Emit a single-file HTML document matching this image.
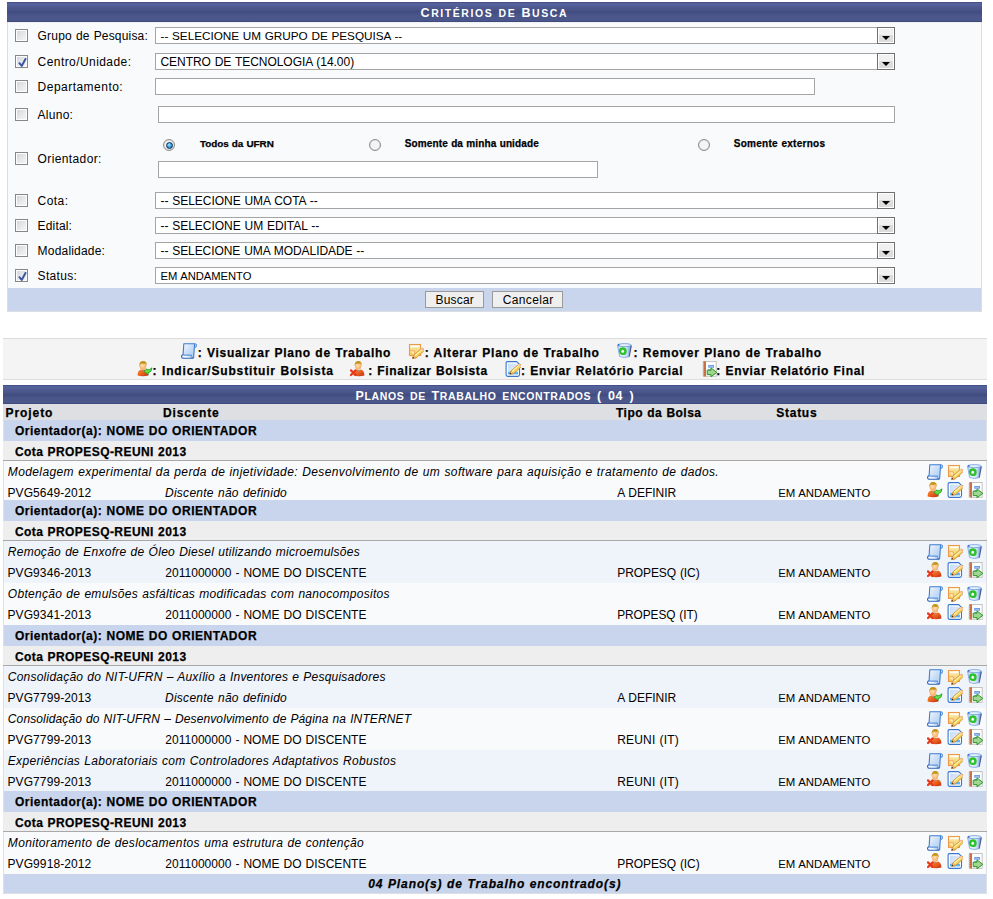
<!DOCTYPE html>
<html><head><meta charset="utf-8"><title>SIGAA</title><style>
html,body{margin:0;padding:0;background:#fff;width:993px;height:899px;overflow:hidden;}
body{position:relative;font-family:"Liberation Sans",sans-serif;}
.r,.t,.cb,.sb,.rd,.ic,.cap{position:absolute;}
.t{white-space:pre;}
.cb{width:13px;height:13px;box-sizing:border-box;border:1px solid #878787;background:linear-gradient(135deg,#cfd3da 0%,#e9ebee 60%,#f6f6f6 100%);box-shadow:inset 0 0 0 1px #fdfdfd;}
.sb{width:18px;box-sizing:border-box;border:1px solid #707070;background:linear-gradient(#f0f0f0 0%,#f0f0f0 45%,#dcdcdc 50%,#dcdcdc 100%);box-shadow:inset 0 0 0 1px #fff;}
.tri{position:absolute;left:4px;top:8px;width:0;height:0;border-left:4px solid transparent;border-right:4px solid transparent;border-top:4px solid #000;}
.rd{width:12px;height:12px;border-radius:50%;box-sizing:border-box;border:1px solid #8e8e8e;background:radial-gradient(circle at 50% 50%,#f4f4f4 0%,#f4f4f4 55%,#c9c9c9 80%,#bdbdbd 100%);}
.rdot{position:absolute;left:1.5px;top:1.5px;width:7px;height:7px;border-radius:50%;box-sizing:border-box;border:1px solid #0d2c52;background:radial-gradient(circle at 40% 35%,#b8ecff 0%,#34a6ea 45%,#1680d0 100%);}
.cap{color:#fff;font:bold 12px "Liberation Sans",sans-serif;font-variant:small-caps;text-align:center;letter-spacing:1.6px;}
</style></head>
<body>
<svg width="0" height="0" style="position:absolute;left:0;top:0">
<defs>
<linearGradient id="gView" x1="0" y1="0" x2="1" y2="1"><stop offset="0" stop-color="#f2f7fe"/><stop offset="0.5" stop-color="#c9def7"/><stop offset="1" stop-color="#a9cbf2"/></linearGradient>
<linearGradient id="gNote" x1="0" y1="0" x2="0" y2="1"><stop offset="0" stop-color="#fff6d8"/><stop offset="0.3" stop-color="#f9e39a"/><stop offset="1" stop-color="#f3c95a"/></linearGradient>
<linearGradient id="gPen" x1="0" y1="0" x2="1" y2="1"><stop offset="0" stop-color="#fff3a0"/><stop offset="1" stop-color="#e8c030"/></linearGradient>
<linearGradient id="gBin" x1="0" y1="0" x2="1" y2="0"><stop offset="0" stop-color="#b8d2f4"/><stop offset="0.3" stop-color="#eef3fc"/><stop offset="0.7" stop-color="#c4d8f4"/><stop offset="1" stop-color="#4f8ee0"/></linearGradient>
<linearGradient id="gBody" x1="0" y1="0" x2="1" y2="1"><stop offset="0" stop-color="#f8902a"/><stop offset="0.6" stop-color="#e4561c"/><stop offset="1" stop-color="#b82a10"/></linearGradient>
<radialGradient id="gFace" cx="0.45" cy="0.4" r="0.6"><stop offset="0" stop-color="#ffe0b0"/><stop offset="1" stop-color="#f6a860"/></radialGradient>
<linearGradient id="gDoc" x1="0" y1="0" x2="1" y2="1"><stop offset="0" stop-color="#c8ddf8"/><stop offset="1" stop-color="#e6f0fc"/></linearGradient>
</defs></svg>
<div class="r" style="left:7px;top:2px;width:975px;height:20px;background:linear-gradient(to bottom,#44508a 0px,#44508a 1px,#55619a 1px,#54609a 3px,#4e5a8f 5px,#48548a 8px,#414d80 9.5px,#444f83 11px,#4a5689 13px,#4c588c 100%);"></div>
<div class="r" style="left:7px;top:21px;width:975px;height:1px;background:#3f4b7f;"></div>
<div class="r" style="left:7px;top:22px;width:975px;height:290px;background:#f9fafc;border-left:1px solid #dcdde3;border-right:1px solid #dcdde3;border-bottom:1px solid #dcdde3;box-sizing:border-box;"></div>
<div class="r" style="left:8px;top:22px;width:973px;height:1px;background:#eef0f3;"></div>
<div class="r" style="left:8px;top:288px;width:973px;height:23px;background:#c8d5ec;"></div>
<div class="cb" style="left:15px;top:29px"></div>
<div class="cb" style="left:15px;top:55px"><svg width="13" height="13" style="position:absolute;left:0;top:0"><path d="M3.4 7.2 L5.7 9.9 L9.5 3" fill="none" stroke="#3d55a3" stroke-width="2" stroke-linecap="round" stroke-linejoin="round"/></svg></div>
<div class="cb" style="left:15px;top:80px"></div>
<div class="cb" style="left:15px;top:108px"></div>
<div class="cb" style="left:15px;top:152px"></div>
<div class="cb" style="left:15px;top:194px"></div>
<div class="cb" style="left:15px;top:219px"></div>
<div class="cb" style="left:15px;top:244px"></div>
<div class="cb" style="left:15px;top:269px"><svg width="13" height="13" style="position:absolute;left:0;top:0"><path d="M3.4 7.2 L5.7 9.9 L9.5 3" fill="none" stroke="#3d55a3" stroke-width="2" stroke-linecap="round" stroke-linejoin="round"/></svg></div>
<div class="r" style="left:155px;top:27px;width:740px;height:17px;background:#fff;border:1px solid #a5a5a5;box-sizing:border-box;"></div>
<div class="sb" style="left:877px;top:27px;height:17px"><div class="tri"></div></div>
<div class="r" style="left:155px;top:53px;width:740px;height:17px;background:#fff;border:1px solid #a5a5a5;box-sizing:border-box;"></div>
<div class="sb" style="left:877px;top:53px;height:17px"><div class="tri"></div></div>
<div class="r" style="left:155px;top:78px;width:660px;height:17px;background:#fff;border:1px solid #a5a5a5;box-sizing:border-box;"></div>
<div class="r" style="left:158px;top:106px;width:737px;height:17px;background:#fff;border:1px solid #a5a5a5;box-sizing:border-box;"></div>
<div class="r" style="left:158px;top:161px;width:440px;height:17px;background:#fff;border:1px solid #a5a5a5;box-sizing:border-box;"></div>
<div class="r" style="left:155px;top:192px;width:740px;height:17px;background:#fff;border:1px solid #a5a5a5;box-sizing:border-box;"></div>
<div class="sb" style="left:877px;top:192px;height:17px"><div class="tri"></div></div>
<div class="r" style="left:155px;top:217px;width:740px;height:17px;background:#fff;border:1px solid #a5a5a5;box-sizing:border-box;"></div>
<div class="sb" style="left:877px;top:217px;height:17px"><div class="tri"></div></div>
<div class="r" style="left:155px;top:242px;width:740px;height:17px;background:#fff;border:1px solid #a5a5a5;box-sizing:border-box;"></div>
<div class="sb" style="left:877px;top:242px;height:17px"><div class="tri"></div></div>
<div class="r" style="left:155px;top:267px;width:740px;height:17px;background:#fff;border:1px solid #a5a5a5;box-sizing:border-box;"></div>
<div class="sb" style="left:877px;top:267px;height:17px"><div class="tri"></div></div>
<div class="rd" style="left:163px;top:139px"><div class="rdot"></div></div>
<div class="rd" style="left:369px;top:139px"></div>
<div class="rd" style="left:698px;top:139px"></div>
<div class="r" style="left:425px;top:291px;width:59px;height:17px;background:#efefef;border:1px solid #9a9a9a;box-sizing:border-box;"></div>
<div class="r" style="left:492px;top:291px;width:71px;height:17px;background:#efefef;border:1px solid #9a9a9a;box-sizing:border-box;"></div>
<div class="r" style="left:3px;top:338px;width:984px;height:42px;background:#f4f4f4;border-top:1px solid #dcdcdc;border-bottom:1px solid #dcdcdc;box-sizing:border-box;"></div>
<div class="r" style="left:3px;top:385px;width:984px;height:19px;background:linear-gradient(to bottom,#44508a 0px,#44508a 1px,#55619a 1px,#54609a 3px,#4e5a8f 5px,#48548a 8px,#414d80 9.5px,#444f83 11px,#4a5689 13px,#4c588c 100%);"></div>
<div class="r" style="left:3px;top:403px;width:984px;height:1px;background:#3f4b7f;"></div>
<div class="r" style="left:3px;top:404px;width:984px;height:490px;background:#dedfe3;"></div>
<div class="r" style="left:4px;top:420px;width:982px;height:21px;background:#c8d5ec;"></div>
<div class="r" style="left:4px;top:500px;width:982px;height:21px;background:#c8d5ec;"></div>
<div class="r" style="left:4px;top:625px;width:982px;height:21px;background:#c8d5ec;"></div>
<div class="r" style="left:4px;top:791px;width:982px;height:21px;background:#c8d5ec;"></div>
<div class="r" style="left:3px;top:441px;width:984px;height:19px;background:#eeeeee;"></div>
<div class="r" style="left:3px;top:460px;width:984px;height:1px;background:#a9a9a9;"></div>
<div class="r" style="left:3px;top:521px;width:984px;height:19px;background:#eeeeee;"></div>
<div class="r" style="left:3px;top:540px;width:984px;height:1px;background:#a9a9a9;"></div>
<div class="r" style="left:3px;top:646px;width:984px;height:19px;background:#eeeeee;"></div>
<div class="r" style="left:3px;top:665px;width:984px;height:1px;background:#a9a9a9;"></div>
<div class="r" style="left:3px;top:812px;width:984px;height:19px;background:#eeeeee;"></div>
<div class="r" style="left:3px;top:831px;width:984px;height:1px;background:#a9a9a9;"></div>
<div class="r" style="left:4px;top:461px;width:982px;height:39px;background:#f9fafc;"></div>
<div class="r" style="left:4px;top:541px;width:982px;height:42px;background:#eff3fa;"></div>
<div class="r" style="left:4px;top:583px;width:982px;height:42px;background:#f9fafc;"></div>
<div class="r" style="left:4px;top:666px;width:982px;height:42px;background:#eff3fa;"></div>
<div class="r" style="left:4px;top:708px;width:982px;height:42px;background:#f9fafc;"></div>
<div class="r" style="left:4px;top:750px;width:982px;height:41px;background:#eff3fa;"></div>
<div class="r" style="left:4px;top:832px;width:982px;height:42px;background:#f9fafc;"></div>
<div class="r" style="left:4px;top:874px;width:982px;height:19px;background:#c8d5ec;"></div>
<div class="r" style="left:3px;top:893px;width:984px;height:1px;background:#dedfe3;"></div>

<div class="t" style="left:37.6px;top:30px;font:normal normal 12.00px/12px 'Liberation Sans',sans-serif;letter-spacing:0.178px;word-spacing:0.55px;color:#000;">Grupo de Pesquisa:</div>
<div class="t" style="left:37.6px;top:56px;font:normal normal 12.00px/12px 'Liberation Sans',sans-serif;letter-spacing:0.430px;word-spacing:0.55px;color:#000;">Centro/Unidade:</div>
<div class="t" style="left:37.6px;top:81px;font:normal normal 12.00px/12px 'Liberation Sans',sans-serif;letter-spacing:0.477px;word-spacing:0.55px;color:#000;">Departamento:</div>
<div class="t" style="left:37.6px;top:109px;font:normal normal 12.00px/12px 'Liberation Sans',sans-serif;letter-spacing:0.255px;word-spacing:0.55px;color:#000;">Aluno:</div>
<div class="t" style="left:37.6px;top:153px;font:normal normal 12.00px/12px 'Liberation Sans',sans-serif;letter-spacing:0.377px;word-spacing:0.55px;color:#000;">Orientador:</div>
<div class="t" style="left:37.6px;top:195px;font:normal normal 12.00px/12px 'Liberation Sans',sans-serif;letter-spacing:0.430px;word-spacing:0.55px;color:#000;">Cota:</div>
<div class="t" style="left:37.6px;top:220px;font:normal normal 12.00px/12px 'Liberation Sans',sans-serif;letter-spacing:0.158px;word-spacing:0.55px;color:#000;">Edital:</div>
<div class="t" style="left:37.6px;top:245px;font:normal normal 12.00px/12px 'Liberation Sans',sans-serif;letter-spacing:0.192px;word-spacing:0.55px;color:#000;">Modalidade:</div>
<div class="t" style="left:37.6px;top:270px;font:normal normal 12.00px/12px 'Liberation Sans',sans-serif;letter-spacing:0.324px;word-spacing:0.55px;color:#000;">Status:</div>
<div class="t" style="left:160.5px;top:30px;font:normal normal 11.76px/12px 'Liberation Sans',sans-serif;letter-spacing:-0.034px;word-spacing:0.55px;color:#000;">-- SELECIONE UM GRUPO DE PESQUISA --</div>
<div class="t" style="left:160.5px;top:56px;font:normal normal 12.00px/12px 'Liberation Sans',sans-serif;letter-spacing:-0.044px;word-spacing:0.55px;color:#000;">CENTRO DE TECNOLOGIA (14.00)</div>
<div class="t" style="left:160.5px;top:195px;font:normal normal 12.00px/12px 'Liberation Sans',sans-serif;letter-spacing:-0.036px;word-spacing:0.55px;color:#000;">-- SELECIONE UMA COTA --</div>
<div class="t" style="left:160.5px;top:220px;font:normal normal 12.00px/12px 'Liberation Sans',sans-serif;letter-spacing:-0.033px;word-spacing:0.55px;color:#000;">-- SELECIONE UM EDITAL --</div>
<div class="t" style="left:160.5px;top:245px;font:normal normal 12.00px/12px 'Liberation Sans',sans-serif;letter-spacing:-0.063px;word-spacing:0.55px;color:#000;">-- SELECIONE UMA MODALIDADE --</div>
<div class="t" style="left:160.5px;top:270px;font:normal normal 11.22px/12px 'Liberation Sans',sans-serif;letter-spacing:-0.041px;word-spacing:0.55px;color:#000;">EM ANDAMENTO</div>
<div class="t" style="left:200.0px;top:139px;font:normal bold 9.88px/10px 'Liberation Sans',sans-serif;letter-spacing:-0.030px;word-spacing:0.4px;color:#000;-webkit-text-stroke:0.25px #000;">Todos da UFRN</div>
<div class="t" style="left:404.8px;top:139px;font:normal bold 10.00px/10px 'Liberation Sans',sans-serif;letter-spacing:0.117px;word-spacing:0.4px;color:#000;-webkit-text-stroke:0.25px #000;">Somente da minha unidade</div>
<div class="t" style="left:733.8px;top:139px;font:normal bold 10.00px/10px 'Liberation Sans',sans-serif;letter-spacing:0.274px;word-spacing:0.4px;color:#000;-webkit-text-stroke:0.25px #000;">Somente externos</div>
<div class="t" style="left:435.6px;top:294px;font:normal normal 12.00px/12px 'Liberation Sans',sans-serif;letter-spacing:0.170px;word-spacing:0.55px;color:#000;">Buscar</div>
<div class="t" style="left:502.8px;top:294px;font:normal normal 12.00px/12px 'Liberation Sans',sans-serif;letter-spacing:0.354px;word-spacing:0.55px;color:#000;">Cancelar</div>
<div class="t" style="left:197.7px;top:347px;font:normal bold 12.00px/12px 'Liberation Sans',sans-serif;letter-spacing:0.734px;word-spacing:0.4px;color:#000;-webkit-text-stroke:0.25px #000;">: Visualizar Plano de Trabalho</div>
<div class="t" style="left:424.7px;top:347px;font:normal bold 12.00px/12px 'Liberation Sans',sans-serif;letter-spacing:0.785px;word-spacing:0.4px;color:#000;-webkit-text-stroke:0.25px #000;">: Alterar Plano de Trabalho</div>
<div class="t" style="left:633.5px;top:347px;font:normal bold 12.00px/12px 'Liberation Sans',sans-serif;letter-spacing:0.797px;word-spacing:0.4px;color:#000;-webkit-text-stroke:0.25px #000;">: Remover Plano de Trabalho</div>
<div class="t" style="left:152.6px;top:365px;font:normal bold 12.00px/12px 'Liberation Sans',sans-serif;letter-spacing:0.842px;word-spacing:0.4px;color:#000;-webkit-text-stroke:0.25px #000;">: Indicar/Substituir Bolsista</div>
<div class="t" style="left:368.3px;top:365px;font:normal bold 12.00px/12px 'Liberation Sans',sans-serif;letter-spacing:0.630px;word-spacing:0.4px;color:#000;-webkit-text-stroke:0.25px #000;">: Finalizar Bolsista</div>
<div class="t" style="left:521.0px;top:365px;font:normal bold 12.00px/12px 'Liberation Sans',sans-serif;letter-spacing:0.730px;word-spacing:0.4px;color:#000;-webkit-text-stroke:0.25px #000;">: Enviar Relatório Parcial</div>
<div class="t" style="left:716.3px;top:365px;font:normal bold 12.00px/12px 'Liberation Sans',sans-serif;letter-spacing:0.705px;word-spacing:0.4px;color:#000;-webkit-text-stroke:0.25px #000;">: Enviar Relatório Final</div>
<div class="t" style="left:5.6px;top:407px;font:normal bold 12.00px/12px 'Liberation Sans',sans-serif;letter-spacing:0.910px;word-spacing:0.4px;color:#000;-webkit-text-stroke:0.25px #000;">Projeto</div>
<div class="t" style="left:163.1px;top:407px;font:normal bold 12.00px/12px 'Liberation Sans',sans-serif;letter-spacing:0.797px;word-spacing:0.4px;color:#000;-webkit-text-stroke:0.25px #000;">Discente</div>
<div class="t" style="left:616.0px;top:407px;font:normal bold 12.00px/12px 'Liberation Sans',sans-serif;letter-spacing:0.479px;word-spacing:0.4px;color:#000;-webkit-text-stroke:0.25px #000;">Tipo da Bolsa</div>
<div class="t" style="left:776.3px;top:407px;font:normal bold 12.00px/12px 'Liberation Sans',sans-serif;letter-spacing:0.725px;word-spacing:0.4px;color:#000;-webkit-text-stroke:0.25px #000;">Status</div>
<div class="t" style="left:14.9px;top:425px;font:normal bold 12.00px/12px 'Liberation Sans',sans-serif;letter-spacing:0.522px;word-spacing:0.4px;color:#000;-webkit-text-stroke:0.25px #000;">Orientador(a): NOME DO ORIENTADOR</div>
<div class="t" style="left:14.9px;top:505px;font:normal bold 12.00px/12px 'Liberation Sans',sans-serif;letter-spacing:0.522px;word-spacing:0.4px;color:#000;-webkit-text-stroke:0.25px #000;">Orientador(a): NOME DO ORIENTADOR</div>
<div class="t" style="left:14.9px;top:630px;font:normal bold 12.00px/12px 'Liberation Sans',sans-serif;letter-spacing:0.522px;word-spacing:0.4px;color:#000;-webkit-text-stroke:0.25px #000;">Orientador(a): NOME DO ORIENTADOR</div>
<div class="t" style="left:14.9px;top:796px;font:normal bold 12.00px/12px 'Liberation Sans',sans-serif;letter-spacing:0.522px;word-spacing:0.4px;color:#000;-webkit-text-stroke:0.25px #000;">Orientador(a): NOME DO ORIENTADOR</div>
<div class="t" style="left:14.9px;top:446px;font:normal bold 12.00px/12px 'Liberation Sans',sans-serif;letter-spacing:0.440px;word-spacing:0.4px;color:#000;-webkit-text-stroke:0.25px #000;">Cota PROPESQ-REUNI 2013</div>
<div class="t" style="left:14.9px;top:526px;font:normal bold 12.00px/12px 'Liberation Sans',sans-serif;letter-spacing:0.440px;word-spacing:0.4px;color:#000;-webkit-text-stroke:0.25px #000;">Cota PROPESQ-REUNI 2013</div>
<div class="t" style="left:14.9px;top:651px;font:normal bold 12.00px/12px 'Liberation Sans',sans-serif;letter-spacing:0.440px;word-spacing:0.4px;color:#000;-webkit-text-stroke:0.25px #000;">Cota PROPESQ-REUNI 2013</div>
<div class="t" style="left:14.9px;top:817px;font:normal bold 12.00px/12px 'Liberation Sans',sans-serif;letter-spacing:0.440px;word-spacing:0.4px;color:#000;-webkit-text-stroke:0.25px #000;">Cota PROPESQ-REUNI 2013</div>
<div class="t" style="left:7.8px;top:466px;font:italic normal 12.00px/12px 'Liberation Sans',sans-serif;letter-spacing:0.387px;word-spacing:0.55px;color:#000;">Modelagem experimental da perda de injetividade: Desenvolvimento de um software para aquisição e tratamento de dados.</div>
<div class="t" style="left:7.5px;top:487px;font:normal normal 12.00px/12px 'Liberation Sans',sans-serif;letter-spacing:0.088px;word-spacing:0.55px;color:#000;">PVG5649-2012</div>
<div class="t" style="left:165.0px;top:487px;font:italic normal 12.00px/12px 'Liberation Sans',sans-serif;letter-spacing:0.264px;word-spacing:0.55px;color:#000;">Discente não definido</div>
<div class="t" style="left:617.2px;top:487px;font:normal normal 12.00px/12px 'Liberation Sans',sans-serif;letter-spacing:-0.036px;word-spacing:0.55px;color:#000;">A DEFINIR</div>
<div class="t" style="left:778.3px;top:487px;font:normal normal 11.36px/12px 'Liberation Sans',sans-serif;letter-spacing:-0.042px;word-spacing:0.55px;color:#000;">EM ANDAMENTO</div>
<div class="t" style="left:7.8px;top:546px;font:italic normal 12.00px/12px 'Liberation Sans',sans-serif;letter-spacing:0.267px;word-spacing:0.55px;color:#000;">Remoção de Enxofre de Óleo Diesel utilizando microemulsões</div>
<div class="t" style="left:7.5px;top:567px;font:normal normal 12.00px/12px 'Liberation Sans',sans-serif;letter-spacing:0.088px;word-spacing:0.55px;color:#000;">PVG9346-2013</div>
<div class="t" style="left:165.2px;top:567px;font:normal normal 12.00px/12px 'Liberation Sans',sans-serif;letter-spacing:0.045px;word-spacing:0.55px;color:#000;">2011000000 - NOME DO DISCENTE</div>
<div class="t" style="left:617.2px;top:567px;font:normal normal 12.00px/12px 'Liberation Sans',sans-serif;letter-spacing:-0.066px;word-spacing:0.55px;color:#000;">PROPESQ (IC)</div>
<div class="t" style="left:778.3px;top:567px;font:normal normal 11.36px/12px 'Liberation Sans',sans-serif;letter-spacing:-0.042px;word-spacing:0.55px;color:#000;">EM ANDAMENTO</div>
<div class="t" style="left:7.8px;top:588px;font:italic normal 12.00px/12px 'Liberation Sans',sans-serif;letter-spacing:0.288px;word-spacing:0.55px;color:#000;">Obtenção de emulsões asfálticas modificadas com nanocompositos</div>
<div class="t" style="left:7.5px;top:609px;font:normal normal 12.00px/12px 'Liberation Sans',sans-serif;letter-spacing:0.088px;word-spacing:0.55px;color:#000;">PVG9341-2013</div>
<div class="t" style="left:165.2px;top:609px;font:normal normal 12.00px/12px 'Liberation Sans',sans-serif;letter-spacing:0.045px;word-spacing:0.55px;color:#000;">2011000000 - NOME DO DISCENTE</div>
<div class="t" style="left:617.2px;top:609px;font:normal normal 11.85px/12px 'Liberation Sans',sans-serif;letter-spacing:-0.036px;word-spacing:0.55px;color:#000;">PROPESQ (IT)</div>
<div class="t" style="left:778.3px;top:609px;font:normal normal 11.36px/12px 'Liberation Sans',sans-serif;letter-spacing:-0.042px;word-spacing:0.55px;color:#000;">EM ANDAMENTO</div>
<div class="t" style="left:7.8px;top:671px;font:italic normal 12.00px/12px 'Liberation Sans',sans-serif;letter-spacing:0.224px;word-spacing:0.55px;color:#000;">Consolidação do NIT-UFRN – Auxílio a Inventores e Pesquisadores</div>
<div class="t" style="left:7.5px;top:692px;font:normal normal 12.00px/12px 'Liberation Sans',sans-serif;letter-spacing:0.088px;word-spacing:0.55px;color:#000;">PVG7799-2013</div>
<div class="t" style="left:165.0px;top:692px;font:italic normal 12.00px/12px 'Liberation Sans',sans-serif;letter-spacing:0.264px;word-spacing:0.55px;color:#000;">Discente não definido</div>
<div class="t" style="left:617.2px;top:692px;font:normal normal 12.00px/12px 'Liberation Sans',sans-serif;letter-spacing:-0.036px;word-spacing:0.55px;color:#000;">A DEFINIR</div>
<div class="t" style="left:778.3px;top:692px;font:normal normal 11.36px/12px 'Liberation Sans',sans-serif;letter-spacing:-0.042px;word-spacing:0.55px;color:#000;">EM ANDAMENTO</div>
<div class="t" style="left:7.8px;top:713px;font:italic normal 12.00px/12px 'Liberation Sans',sans-serif;letter-spacing:0.123px;word-spacing:0.55px;color:#000;">Consolidação do NIT-UFRN – Desenvolvimento de Página na INTERNET</div>
<div class="t" style="left:7.5px;top:734px;font:normal normal 12.00px/12px 'Liberation Sans',sans-serif;letter-spacing:0.088px;word-spacing:0.55px;color:#000;">PVG7799-2013</div>
<div class="t" style="left:165.2px;top:734px;font:normal normal 12.00px/12px 'Liberation Sans',sans-serif;letter-spacing:0.045px;word-spacing:0.55px;color:#000;">2011000000 - NOME DO DISCENTE</div>
<div class="t" style="left:617.2px;top:734px;font:normal normal 12.00px/12px 'Liberation Sans',sans-serif;letter-spacing:0.192px;word-spacing:0.55px;color:#000;">REUNI (IT)</div>
<div class="t" style="left:778.3px;top:734px;font:normal normal 11.36px/12px 'Liberation Sans',sans-serif;letter-spacing:-0.042px;word-spacing:0.55px;color:#000;">EM ANDAMENTO</div>
<div class="t" style="left:7.8px;top:755px;font:italic normal 12.00px/12px 'Liberation Sans',sans-serif;letter-spacing:0.307px;word-spacing:0.55px;color:#000;">Experiências Laboratoriais com Controladores Adaptativos Robustos</div>
<div class="t" style="left:7.5px;top:776px;font:normal normal 12.00px/12px 'Liberation Sans',sans-serif;letter-spacing:0.088px;word-spacing:0.55px;color:#000;">PVG7799-2013</div>
<div class="t" style="left:165.2px;top:776px;font:normal normal 12.00px/12px 'Liberation Sans',sans-serif;letter-spacing:0.045px;word-spacing:0.55px;color:#000;">2011000000 - NOME DO DISCENTE</div>
<div class="t" style="left:617.2px;top:776px;font:normal normal 12.00px/12px 'Liberation Sans',sans-serif;letter-spacing:0.192px;word-spacing:0.55px;color:#000;">REUNI (IT)</div>
<div class="t" style="left:778.3px;top:776px;font:normal normal 11.36px/12px 'Liberation Sans',sans-serif;letter-spacing:-0.042px;word-spacing:0.55px;color:#000;">EM ANDAMENTO</div>
<div class="t" style="left:7.8px;top:837px;font:italic normal 12.00px/12px 'Liberation Sans',sans-serif;letter-spacing:0.342px;word-spacing:0.55px;color:#000;">Monitoramento de deslocamentos uma estrutura de contenção</div>
<div class="t" style="left:7.5px;top:858px;font:normal normal 12.00px/12px 'Liberation Sans',sans-serif;letter-spacing:0.088px;word-spacing:0.55px;color:#000;">PVG9918-2012</div>
<div class="t" style="left:165.2px;top:858px;font:normal normal 12.00px/12px 'Liberation Sans',sans-serif;letter-spacing:0.045px;word-spacing:0.55px;color:#000;">2011000000 - NOME DO DISCENTE</div>
<div class="t" style="left:617.2px;top:858px;font:normal normal 12.00px/12px 'Liberation Sans',sans-serif;letter-spacing:-0.066px;word-spacing:0.55px;color:#000;">PROPESQ (IC)</div>
<div class="t" style="left:778.3px;top:858px;font:normal normal 11.36px/12px 'Liberation Sans',sans-serif;letter-spacing:-0.042px;word-spacing:0.55px;color:#000;">EM ANDAMENTO</div>
<div class="t" style="left:368.2px;top:878px;font:italic bold 12.00px/12px 'Liberation Sans',sans-serif;letter-spacing:0.895px;word-spacing:0.4px;color:#000;-webkit-text-stroke:0.25px #000;">04 Plano(s) de Trabalho encontrado(s)</div>
<div class="t" style="left:420.6px;top:7px;font:bold 12.5px/12.5px 'Liberation Sans',sans-serif;letter-spacing:1.558px;word-spacing:0.8px;color:#fff;"><span style="font-size:12.5px">C</span><span style="font-size:10.5px">RITÉRIOS DE </span><span style="font-size:12.5px">B</span><span style="font-size:10.5px">USCA</span></div>
<div class="t" style="left:355.6px;top:390px;font:bold 12.5px/12.5px 'Liberation Sans',sans-serif;letter-spacing:0.606px;word-spacing:2.2px;color:#fff;"><span style="font-size:12.5px">P</span><span style="font-size:10.5px">LANOS DE </span><span style="font-size:12.5px">T</span><span style="font-size:10.5px">RABALHO ENCONTRADOS </span><span style="font-size:12.5px">( 04 )</span></div>
<svg class="ic" style="left:181px;top:343px" width="16" height="16" viewBox="0 0 16 16"><path d="M2.8 0.7H13.6L12.6 14.6H1.9Z" fill="url(#gView)" stroke="#3f7ed0" stroke-width="1.1" stroke-linejoin="round"/><path d="M13.6 0.7Q15.6 0.8 15.3 2.8Q15 4.5 13.3 4" fill="none" stroke="#4a88d8" stroke-width="1.1"/><path d="M2.2 11.9Q0.4 12 0.5 13.6Q0.7 15.3 2.6 15.3H12.4" fill="#f4f8fe" stroke="#3468b8" stroke-width="1.1"/><path d="M2.5 12.1H10.6V13.5" fill="none" stroke="#4d86d6" stroke-width="1"/></svg>
<svg class="ic" style="left:408px;top:343px" width="16" height="16" viewBox="0 0 16 16"><rect x="1.5" y="1.5" width="11" height="11" fill="url(#gNote)" stroke="#ee9a48" stroke-width="1.1"/><rect x="2.6" y="2.6" width="8.8" height="1.6" fill="#fffdf5"/><path d="M2 7.8H6.3V12" fill="#fff2c8" stroke="#f0a050" stroke-width="0.9"/><path d="M4.6 15.4L5.7 12.1L13 5.9Q14.6 4.7 15.8 6Q16.6 7.4 15.3 8.6L8.1 14.9Z" fill="url(#gPen)" stroke="#cf8a2e" stroke-width="0.8" stroke-linejoin="round"/><path d="M6.6 12.9L13.6 6.8" stroke="#fff8c8" stroke-width="0.9"/><path d="M12.6 6.2Q14.9 5.6 15.2 8.2" fill="none" stroke="#f6c8a8" stroke-width="1.6"/><path d="M4.6 15.4L5.7 12.1L8.1 14.9Z" fill="#f2caa0" stroke="#cf8a2e" stroke-width="0.5"/><path d="M4.5 15.5L5 13.7L6.4 15Z" fill="#3a2410"/></svg>
<svg class="ic" style="left:617px;top:343px" width="16" height="16" viewBox="0 0 16 16"><path d="M0.5 2.2L2.6 13.4Q7.2 15.6 12.2 13.6L14.4 2.4Z" fill="url(#gBin)"/><path d="M0.5 2.2L2.6 13.4Q7.2 15.6 12.2 13.6" fill="none" stroke="#7aa4e0" stroke-width="0.8"/><path d="M14.4 2.4L12.2 13.6" stroke="#2a3a66" stroke-width="1.1" opacity="0.75"/><ellipse cx="7.4" cy="2.1" rx="6.9" ry="1.5" fill="#e2effd" stroke="#5f92dc" stroke-width="0.7"/><ellipse cx="1.7" cy="1.9" rx="1.1" ry="0.7" fill="#1656c4"/><circle cx="5.8" cy="8.2" r="2.7" fill="none" stroke="#2cc22a" stroke-width="2.4"/><path d="M5.6 6.6L7 9.2L4.4 9.2Z" fill="#f4f6fb"/></svg>
<svg class="ic" style="left:137px;top:361px" width="16" height="16" viewBox="0 0 16 16"><path d="M0.6 14.6Q0.4 9.6 4 8.6Q6 9.8 8 8.6Q11.4 9.4 11.4 14.6Q6 15.8 0.6 14.6Z" fill="url(#gBody)"/><ellipse cx="5.9" cy="5.2" rx="3.3" ry="3.7" fill="url(#gFace)"/><path d="M2.2 5.6Q1.8 0 6.1 0Q10.4 0 9.8 5.4Q9.4 2.6 8.4 2.4Q6 3.2 4 2.4Q2.8 3 2.2 5.6Z" fill="#c49418"/><path d="M5 9.2L6 10.8L7 9.2Z" fill="#8090c0"/><path d="M7 10.4L10 7.8L10.2 9Q12.8 8.8 15 6.8Q15 11 11 11.8L11.4 13.4Z" fill="#66e24e" stroke="#1e9a1c" stroke-width="0.8" stroke-linejoin="round"/></svg>
<svg class="ic" style="left:350px;top:361px" width="16" height="16" viewBox="0 0 16 16"><path d="M3.6 14.6Q3.4 9.6 7 8.6Q9 9.8 11 8.6Q14.4 9.4 14.4 14.6Q9 15.8 3.6 14.6Z" fill="url(#gBody)"/><ellipse cx="8.1" cy="5.2" rx="3" ry="3.6" fill="url(#gFace)"/><path d="M4.6 5.6Q4.2 0 8.3 0Q12.4 0 11.8 5.6Q11.4 2.6 10.4 2.4Q8 3.2 6.4 2.4Q5.2 3 4.6 5.6Z" fill="#c49418"/><path d="M7.2 9.2L8.2 10.8L9.2 9.2Z" fill="#8090c0"/><path d="M1 9.4L5.6 14M5.6 9.4L1 14" stroke="#e8381a" stroke-width="2.2" stroke-linecap="round"/></svg>
<svg class="ic" style="left:505px;top:361px" width="16" height="16" viewBox="0 0 16 16"><path d="M2.6 0.6H11.6L14.5 3.4V13.6Q14.5 15.4 12.8 15.4H2.8Q1.1 15.4 1.1 13.6V2.2Q1.1 0.6 2.6 0.6Z" fill="#fff" stroke="#3a76cc" stroke-width="1.1"/><rect x="3" y="2.6" width="9.6" height="10" fill="url(#gDoc)"/><rect x="3" y="10.8" width="10" height="2.6" fill="#5ab4f4"/><g transform="translate(0.2,-2.2)"><path d="M4.6 15.4L5.7 12.1L13 5.9Q14.6 4.7 15.8 6Q16.6 7.4 15.3 8.6L8.1 14.9Z" fill="url(#gPen)" stroke="#cf8a2e" stroke-width="0.8" stroke-linejoin="round"/><path d="M6.6 12.9L13.6 6.8" stroke="#fff8c8" stroke-width="0.9"/><path d="M12.6 6.2Q14.9 5.6 15.2 8.2" fill="none" stroke="#f6c8a8" stroke-width="1.6"/><path d="M4.6 15.4L5.7 12.1L8.1 14.9Z" fill="#f2caa0" stroke="#cf8a2e" stroke-width="0.5"/><path d="M4.5 15.5L5 13.7L6.4 15Z" fill="#3a2410"/></g></svg>
<svg class="ic" style="left:701px;top:361px" width="16" height="16" viewBox="0 0 16 16"><rect x="4.4" y="0.5" width="10.8" height="14.8" fill="#fdfdfd" stroke="#c4c4c4" stroke-width="1"/><rect x="2.2" y="0.3" width="2.6" height="15.2" fill="#c85a28"/><path d="M1 2.2H3.4M1 4.2H3.4M1 6.2H3.4M1 8.2H3.4M1 10.2H3.4M1 12.2H3.4M1 14.2H3.4" stroke="#d8d8d8" stroke-width="0.9"/><rect x="7.2" y="4" width="5.8" height="2.7" fill="#6a9ce4"/><rect x="8.2" y="4.9" width="3.8" height="0.9" fill="#a8c8f4"/><rect x="7.2" y="8" width="3" height="1.2" fill="#6a9ce4"/><path d="M6.2 9.2H10V6.9L15.8 11.4L10 15.8V13.6H6.2Z" fill="#a2d494" stroke="#2a9a22" stroke-width="1" stroke-linejoin="round"/></svg>
<svg class="ic" style="left:927px;top:464px" width="16" height="16" viewBox="0 0 16 16"><path d="M2.8 0.7H13.6L12.6 14.6H1.9Z" fill="url(#gView)" stroke="#3f7ed0" stroke-width="1.1" stroke-linejoin="round"/><path d="M13.6 0.7Q15.6 0.8 15.3 2.8Q15 4.5 13.3 4" fill="none" stroke="#4a88d8" stroke-width="1.1"/><path d="M2.2 11.9Q0.4 12 0.5 13.6Q0.7 15.3 2.6 15.3H12.4" fill="#f4f8fe" stroke="#3468b8" stroke-width="1.1"/><path d="M2.5 12.1H10.6V13.5" fill="none" stroke="#4d86d6" stroke-width="1"/></svg>
<svg class="ic" style="left:947px;top:464px" width="16" height="16" viewBox="0 0 16 16"><rect x="1.5" y="1.5" width="11" height="11" fill="url(#gNote)" stroke="#ee9a48" stroke-width="1.1"/><rect x="2.6" y="2.6" width="8.8" height="1.6" fill="#fffdf5"/><path d="M2 7.8H6.3V12" fill="#fff2c8" stroke="#f0a050" stroke-width="0.9"/><path d="M4.6 15.4L5.7 12.1L13 5.9Q14.6 4.7 15.8 6Q16.6 7.4 15.3 8.6L8.1 14.9Z" fill="url(#gPen)" stroke="#cf8a2e" stroke-width="0.8" stroke-linejoin="round"/><path d="M6.6 12.9L13.6 6.8" stroke="#fff8c8" stroke-width="0.9"/><path d="M12.6 6.2Q14.9 5.6 15.2 8.2" fill="none" stroke="#f6c8a8" stroke-width="1.6"/><path d="M4.6 15.4L5.7 12.1L8.1 14.9Z" fill="#f2caa0" stroke="#cf8a2e" stroke-width="0.5"/><path d="M4.5 15.5L5 13.7L6.4 15Z" fill="#3a2410"/></svg>
<svg class="ic" style="left:967px;top:464px" width="16" height="16" viewBox="0 0 16 16"><path d="M0.5 2.2L2.6 13.4Q7.2 15.6 12.2 13.6L14.4 2.4Z" fill="url(#gBin)"/><path d="M0.5 2.2L2.6 13.4Q7.2 15.6 12.2 13.6" fill="none" stroke="#7aa4e0" stroke-width="0.8"/><path d="M14.4 2.4L12.2 13.6" stroke="#2a3a66" stroke-width="1.1" opacity="0.75"/><ellipse cx="7.4" cy="2.1" rx="6.9" ry="1.5" fill="#e2effd" stroke="#5f92dc" stroke-width="0.7"/><ellipse cx="1.7" cy="1.9" rx="1.1" ry="0.7" fill="#1656c4"/><circle cx="5.8" cy="8.2" r="2.7" fill="none" stroke="#2cc22a" stroke-width="2.4"/><path d="M5.6 6.6L7 9.2L4.4 9.2Z" fill="#f4f6fb"/></svg>
<svg class="ic" style="left:927px;top:482px" width="16" height="16" viewBox="0 0 16 16"><path d="M0.6 14.6Q0.4 9.6 4 8.6Q6 9.8 8 8.6Q11.4 9.4 11.4 14.6Q6 15.8 0.6 14.6Z" fill="url(#gBody)"/><ellipse cx="5.9" cy="5.2" rx="3.3" ry="3.7" fill="url(#gFace)"/><path d="M2.2 5.6Q1.8 0 6.1 0Q10.4 0 9.8 5.4Q9.4 2.6 8.4 2.4Q6 3.2 4 2.4Q2.8 3 2.2 5.6Z" fill="#c49418"/><path d="M5 9.2L6 10.8L7 9.2Z" fill="#8090c0"/><path d="M7 10.4L10 7.8L10.2 9Q12.8 8.8 15 6.8Q15 11 11 11.8L11.4 13.4Z" fill="#66e24e" stroke="#1e9a1c" stroke-width="0.8" stroke-linejoin="round"/></svg>
<svg class="ic" style="left:947px;top:482px" width="16" height="16" viewBox="0 0 16 16"><path d="M2.6 0.6H11.6L14.5 3.4V13.6Q14.5 15.4 12.8 15.4H2.8Q1.1 15.4 1.1 13.6V2.2Q1.1 0.6 2.6 0.6Z" fill="#fff" stroke="#3a76cc" stroke-width="1.1"/><rect x="3" y="2.6" width="9.6" height="10" fill="url(#gDoc)"/><rect x="3" y="10.8" width="10" height="2.6" fill="#5ab4f4"/><g transform="translate(0.2,-2.2)"><path d="M4.6 15.4L5.7 12.1L13 5.9Q14.6 4.7 15.8 6Q16.6 7.4 15.3 8.6L8.1 14.9Z" fill="url(#gPen)" stroke="#cf8a2e" stroke-width="0.8" stroke-linejoin="round"/><path d="M6.6 12.9L13.6 6.8" stroke="#fff8c8" stroke-width="0.9"/><path d="M12.6 6.2Q14.9 5.6 15.2 8.2" fill="none" stroke="#f6c8a8" stroke-width="1.6"/><path d="M4.6 15.4L5.7 12.1L8.1 14.9Z" fill="#f2caa0" stroke="#cf8a2e" stroke-width="0.5"/><path d="M4.5 15.5L5 13.7L6.4 15Z" fill="#3a2410"/></g></svg>
<svg class="ic" style="left:967px;top:482px" width="16" height="16" viewBox="0 0 16 16"><rect x="4.4" y="0.5" width="10.8" height="14.8" fill="#fdfdfd" stroke="#c4c4c4" stroke-width="1"/><rect x="2.2" y="0.3" width="2.6" height="15.2" fill="#c85a28"/><path d="M1 2.2H3.4M1 4.2H3.4M1 6.2H3.4M1 8.2H3.4M1 10.2H3.4M1 12.2H3.4M1 14.2H3.4" stroke="#d8d8d8" stroke-width="0.9"/><rect x="7.2" y="4" width="5.8" height="2.7" fill="#6a9ce4"/><rect x="8.2" y="4.9" width="3.8" height="0.9" fill="#a8c8f4"/><rect x="7.2" y="8" width="3" height="1.2" fill="#6a9ce4"/><path d="M6.2 9.2H10V6.9L15.8 11.4L10 15.8V13.6H6.2Z" fill="#a2d494" stroke="#2a9a22" stroke-width="1" stroke-linejoin="round"/></svg>
<svg class="ic" style="left:927px;top:544px" width="16" height="16" viewBox="0 0 16 16"><path d="M2.8 0.7H13.6L12.6 14.6H1.9Z" fill="url(#gView)" stroke="#3f7ed0" stroke-width="1.1" stroke-linejoin="round"/><path d="M13.6 0.7Q15.6 0.8 15.3 2.8Q15 4.5 13.3 4" fill="none" stroke="#4a88d8" stroke-width="1.1"/><path d="M2.2 11.9Q0.4 12 0.5 13.6Q0.7 15.3 2.6 15.3H12.4" fill="#f4f8fe" stroke="#3468b8" stroke-width="1.1"/><path d="M2.5 12.1H10.6V13.5" fill="none" stroke="#4d86d6" stroke-width="1"/></svg>
<svg class="ic" style="left:947px;top:544px" width="16" height="16" viewBox="0 0 16 16"><rect x="1.5" y="1.5" width="11" height="11" fill="url(#gNote)" stroke="#ee9a48" stroke-width="1.1"/><rect x="2.6" y="2.6" width="8.8" height="1.6" fill="#fffdf5"/><path d="M2 7.8H6.3V12" fill="#fff2c8" stroke="#f0a050" stroke-width="0.9"/><path d="M4.6 15.4L5.7 12.1L13 5.9Q14.6 4.7 15.8 6Q16.6 7.4 15.3 8.6L8.1 14.9Z" fill="url(#gPen)" stroke="#cf8a2e" stroke-width="0.8" stroke-linejoin="round"/><path d="M6.6 12.9L13.6 6.8" stroke="#fff8c8" stroke-width="0.9"/><path d="M12.6 6.2Q14.9 5.6 15.2 8.2" fill="none" stroke="#f6c8a8" stroke-width="1.6"/><path d="M4.6 15.4L5.7 12.1L8.1 14.9Z" fill="#f2caa0" stroke="#cf8a2e" stroke-width="0.5"/><path d="M4.5 15.5L5 13.7L6.4 15Z" fill="#3a2410"/></svg>
<svg class="ic" style="left:967px;top:544px" width="16" height="16" viewBox="0 0 16 16"><path d="M0.5 2.2L2.6 13.4Q7.2 15.6 12.2 13.6L14.4 2.4Z" fill="url(#gBin)"/><path d="M0.5 2.2L2.6 13.4Q7.2 15.6 12.2 13.6" fill="none" stroke="#7aa4e0" stroke-width="0.8"/><path d="M14.4 2.4L12.2 13.6" stroke="#2a3a66" stroke-width="1.1" opacity="0.75"/><ellipse cx="7.4" cy="2.1" rx="6.9" ry="1.5" fill="#e2effd" stroke="#5f92dc" stroke-width="0.7"/><ellipse cx="1.7" cy="1.9" rx="1.1" ry="0.7" fill="#1656c4"/><circle cx="5.8" cy="8.2" r="2.7" fill="none" stroke="#2cc22a" stroke-width="2.4"/><path d="M5.6 6.6L7 9.2L4.4 9.2Z" fill="#f4f6fb"/></svg>
<svg class="ic" style="left:927px;top:562px" width="16" height="16" viewBox="0 0 16 16"><path d="M3.6 14.6Q3.4 9.6 7 8.6Q9 9.8 11 8.6Q14.4 9.4 14.4 14.6Q9 15.8 3.6 14.6Z" fill="url(#gBody)"/><ellipse cx="8.1" cy="5.2" rx="3" ry="3.6" fill="url(#gFace)"/><path d="M4.6 5.6Q4.2 0 8.3 0Q12.4 0 11.8 5.6Q11.4 2.6 10.4 2.4Q8 3.2 6.4 2.4Q5.2 3 4.6 5.6Z" fill="#c49418"/><path d="M7.2 9.2L8.2 10.8L9.2 9.2Z" fill="#8090c0"/><path d="M1 9.4L5.6 14M5.6 9.4L1 14" stroke="#e8381a" stroke-width="2.2" stroke-linecap="round"/></svg>
<svg class="ic" style="left:947px;top:562px" width="16" height="16" viewBox="0 0 16 16"><path d="M2.6 0.6H11.6L14.5 3.4V13.6Q14.5 15.4 12.8 15.4H2.8Q1.1 15.4 1.1 13.6V2.2Q1.1 0.6 2.6 0.6Z" fill="#fff" stroke="#3a76cc" stroke-width="1.1"/><rect x="3" y="2.6" width="9.6" height="10" fill="url(#gDoc)"/><rect x="3" y="10.8" width="10" height="2.6" fill="#5ab4f4"/><g transform="translate(0.2,-2.2)"><path d="M4.6 15.4L5.7 12.1L13 5.9Q14.6 4.7 15.8 6Q16.6 7.4 15.3 8.6L8.1 14.9Z" fill="url(#gPen)" stroke="#cf8a2e" stroke-width="0.8" stroke-linejoin="round"/><path d="M6.6 12.9L13.6 6.8" stroke="#fff8c8" stroke-width="0.9"/><path d="M12.6 6.2Q14.9 5.6 15.2 8.2" fill="none" stroke="#f6c8a8" stroke-width="1.6"/><path d="M4.6 15.4L5.7 12.1L8.1 14.9Z" fill="#f2caa0" stroke="#cf8a2e" stroke-width="0.5"/><path d="M4.5 15.5L5 13.7L6.4 15Z" fill="#3a2410"/></g></svg>
<svg class="ic" style="left:967px;top:562px" width="16" height="16" viewBox="0 0 16 16"><rect x="4.4" y="0.5" width="10.8" height="14.8" fill="#fdfdfd" stroke="#c4c4c4" stroke-width="1"/><rect x="2.2" y="0.3" width="2.6" height="15.2" fill="#c85a28"/><path d="M1 2.2H3.4M1 4.2H3.4M1 6.2H3.4M1 8.2H3.4M1 10.2H3.4M1 12.2H3.4M1 14.2H3.4" stroke="#d8d8d8" stroke-width="0.9"/><rect x="7.2" y="4" width="5.8" height="2.7" fill="#6a9ce4"/><rect x="8.2" y="4.9" width="3.8" height="0.9" fill="#a8c8f4"/><rect x="7.2" y="8" width="3" height="1.2" fill="#6a9ce4"/><path d="M6.2 9.2H10V6.9L15.8 11.4L10 15.8V13.6H6.2Z" fill="#a2d494" stroke="#2a9a22" stroke-width="1" stroke-linejoin="round"/></svg>
<svg class="ic" style="left:927px;top:586px" width="16" height="16" viewBox="0 0 16 16"><path d="M2.8 0.7H13.6L12.6 14.6H1.9Z" fill="url(#gView)" stroke="#3f7ed0" stroke-width="1.1" stroke-linejoin="round"/><path d="M13.6 0.7Q15.6 0.8 15.3 2.8Q15 4.5 13.3 4" fill="none" stroke="#4a88d8" stroke-width="1.1"/><path d="M2.2 11.9Q0.4 12 0.5 13.6Q0.7 15.3 2.6 15.3H12.4" fill="#f4f8fe" stroke="#3468b8" stroke-width="1.1"/><path d="M2.5 12.1H10.6V13.5" fill="none" stroke="#4d86d6" stroke-width="1"/></svg>
<svg class="ic" style="left:947px;top:586px" width="16" height="16" viewBox="0 0 16 16"><rect x="1.5" y="1.5" width="11" height="11" fill="url(#gNote)" stroke="#ee9a48" stroke-width="1.1"/><rect x="2.6" y="2.6" width="8.8" height="1.6" fill="#fffdf5"/><path d="M2 7.8H6.3V12" fill="#fff2c8" stroke="#f0a050" stroke-width="0.9"/><path d="M4.6 15.4L5.7 12.1L13 5.9Q14.6 4.7 15.8 6Q16.6 7.4 15.3 8.6L8.1 14.9Z" fill="url(#gPen)" stroke="#cf8a2e" stroke-width="0.8" stroke-linejoin="round"/><path d="M6.6 12.9L13.6 6.8" stroke="#fff8c8" stroke-width="0.9"/><path d="M12.6 6.2Q14.9 5.6 15.2 8.2" fill="none" stroke="#f6c8a8" stroke-width="1.6"/><path d="M4.6 15.4L5.7 12.1L8.1 14.9Z" fill="#f2caa0" stroke="#cf8a2e" stroke-width="0.5"/><path d="M4.5 15.5L5 13.7L6.4 15Z" fill="#3a2410"/></svg>
<svg class="ic" style="left:967px;top:586px" width="16" height="16" viewBox="0 0 16 16"><path d="M0.5 2.2L2.6 13.4Q7.2 15.6 12.2 13.6L14.4 2.4Z" fill="url(#gBin)"/><path d="M0.5 2.2L2.6 13.4Q7.2 15.6 12.2 13.6" fill="none" stroke="#7aa4e0" stroke-width="0.8"/><path d="M14.4 2.4L12.2 13.6" stroke="#2a3a66" stroke-width="1.1" opacity="0.75"/><ellipse cx="7.4" cy="2.1" rx="6.9" ry="1.5" fill="#e2effd" stroke="#5f92dc" stroke-width="0.7"/><ellipse cx="1.7" cy="1.9" rx="1.1" ry="0.7" fill="#1656c4"/><circle cx="5.8" cy="8.2" r="2.7" fill="none" stroke="#2cc22a" stroke-width="2.4"/><path d="M5.6 6.6L7 9.2L4.4 9.2Z" fill="#f4f6fb"/></svg>
<svg class="ic" style="left:927px;top:604px" width="16" height="16" viewBox="0 0 16 16"><path d="M3.6 14.6Q3.4 9.6 7 8.6Q9 9.8 11 8.6Q14.4 9.4 14.4 14.6Q9 15.8 3.6 14.6Z" fill="url(#gBody)"/><ellipse cx="8.1" cy="5.2" rx="3" ry="3.6" fill="url(#gFace)"/><path d="M4.6 5.6Q4.2 0 8.3 0Q12.4 0 11.8 5.6Q11.4 2.6 10.4 2.4Q8 3.2 6.4 2.4Q5.2 3 4.6 5.6Z" fill="#c49418"/><path d="M7.2 9.2L8.2 10.8L9.2 9.2Z" fill="#8090c0"/><path d="M1 9.4L5.6 14M5.6 9.4L1 14" stroke="#e8381a" stroke-width="2.2" stroke-linecap="round"/></svg>
<svg class="ic" style="left:947px;top:604px" width="16" height="16" viewBox="0 0 16 16"><path d="M2.6 0.6H11.6L14.5 3.4V13.6Q14.5 15.4 12.8 15.4H2.8Q1.1 15.4 1.1 13.6V2.2Q1.1 0.6 2.6 0.6Z" fill="#fff" stroke="#3a76cc" stroke-width="1.1"/><rect x="3" y="2.6" width="9.6" height="10" fill="url(#gDoc)"/><rect x="3" y="10.8" width="10" height="2.6" fill="#5ab4f4"/><g transform="translate(0.2,-2.2)"><path d="M4.6 15.4L5.7 12.1L13 5.9Q14.6 4.7 15.8 6Q16.6 7.4 15.3 8.6L8.1 14.9Z" fill="url(#gPen)" stroke="#cf8a2e" stroke-width="0.8" stroke-linejoin="round"/><path d="M6.6 12.9L13.6 6.8" stroke="#fff8c8" stroke-width="0.9"/><path d="M12.6 6.2Q14.9 5.6 15.2 8.2" fill="none" stroke="#f6c8a8" stroke-width="1.6"/><path d="M4.6 15.4L5.7 12.1L8.1 14.9Z" fill="#f2caa0" stroke="#cf8a2e" stroke-width="0.5"/><path d="M4.5 15.5L5 13.7L6.4 15Z" fill="#3a2410"/></g></svg>
<svg class="ic" style="left:967px;top:604px" width="16" height="16" viewBox="0 0 16 16"><rect x="4.4" y="0.5" width="10.8" height="14.8" fill="#fdfdfd" stroke="#c4c4c4" stroke-width="1"/><rect x="2.2" y="0.3" width="2.6" height="15.2" fill="#c85a28"/><path d="M1 2.2H3.4M1 4.2H3.4M1 6.2H3.4M1 8.2H3.4M1 10.2H3.4M1 12.2H3.4M1 14.2H3.4" stroke="#d8d8d8" stroke-width="0.9"/><rect x="7.2" y="4" width="5.8" height="2.7" fill="#6a9ce4"/><rect x="8.2" y="4.9" width="3.8" height="0.9" fill="#a8c8f4"/><rect x="7.2" y="8" width="3" height="1.2" fill="#6a9ce4"/><path d="M6.2 9.2H10V6.9L15.8 11.4L10 15.8V13.6H6.2Z" fill="#a2d494" stroke="#2a9a22" stroke-width="1" stroke-linejoin="round"/></svg>
<svg class="ic" style="left:927px;top:669px" width="16" height="16" viewBox="0 0 16 16"><path d="M2.8 0.7H13.6L12.6 14.6H1.9Z" fill="url(#gView)" stroke="#3f7ed0" stroke-width="1.1" stroke-linejoin="round"/><path d="M13.6 0.7Q15.6 0.8 15.3 2.8Q15 4.5 13.3 4" fill="none" stroke="#4a88d8" stroke-width="1.1"/><path d="M2.2 11.9Q0.4 12 0.5 13.6Q0.7 15.3 2.6 15.3H12.4" fill="#f4f8fe" stroke="#3468b8" stroke-width="1.1"/><path d="M2.5 12.1H10.6V13.5" fill="none" stroke="#4d86d6" stroke-width="1"/></svg>
<svg class="ic" style="left:947px;top:669px" width="16" height="16" viewBox="0 0 16 16"><rect x="1.5" y="1.5" width="11" height="11" fill="url(#gNote)" stroke="#ee9a48" stroke-width="1.1"/><rect x="2.6" y="2.6" width="8.8" height="1.6" fill="#fffdf5"/><path d="M2 7.8H6.3V12" fill="#fff2c8" stroke="#f0a050" stroke-width="0.9"/><path d="M4.6 15.4L5.7 12.1L13 5.9Q14.6 4.7 15.8 6Q16.6 7.4 15.3 8.6L8.1 14.9Z" fill="url(#gPen)" stroke="#cf8a2e" stroke-width="0.8" stroke-linejoin="round"/><path d="M6.6 12.9L13.6 6.8" stroke="#fff8c8" stroke-width="0.9"/><path d="M12.6 6.2Q14.9 5.6 15.2 8.2" fill="none" stroke="#f6c8a8" stroke-width="1.6"/><path d="M4.6 15.4L5.7 12.1L8.1 14.9Z" fill="#f2caa0" stroke="#cf8a2e" stroke-width="0.5"/><path d="M4.5 15.5L5 13.7L6.4 15Z" fill="#3a2410"/></svg>
<svg class="ic" style="left:967px;top:669px" width="16" height="16" viewBox="0 0 16 16"><path d="M0.5 2.2L2.6 13.4Q7.2 15.6 12.2 13.6L14.4 2.4Z" fill="url(#gBin)"/><path d="M0.5 2.2L2.6 13.4Q7.2 15.6 12.2 13.6" fill="none" stroke="#7aa4e0" stroke-width="0.8"/><path d="M14.4 2.4L12.2 13.6" stroke="#2a3a66" stroke-width="1.1" opacity="0.75"/><ellipse cx="7.4" cy="2.1" rx="6.9" ry="1.5" fill="#e2effd" stroke="#5f92dc" stroke-width="0.7"/><ellipse cx="1.7" cy="1.9" rx="1.1" ry="0.7" fill="#1656c4"/><circle cx="5.8" cy="8.2" r="2.7" fill="none" stroke="#2cc22a" stroke-width="2.4"/><path d="M5.6 6.6L7 9.2L4.4 9.2Z" fill="#f4f6fb"/></svg>
<svg class="ic" style="left:927px;top:687px" width="16" height="16" viewBox="0 0 16 16"><path d="M0.6 14.6Q0.4 9.6 4 8.6Q6 9.8 8 8.6Q11.4 9.4 11.4 14.6Q6 15.8 0.6 14.6Z" fill="url(#gBody)"/><ellipse cx="5.9" cy="5.2" rx="3.3" ry="3.7" fill="url(#gFace)"/><path d="M2.2 5.6Q1.8 0 6.1 0Q10.4 0 9.8 5.4Q9.4 2.6 8.4 2.4Q6 3.2 4 2.4Q2.8 3 2.2 5.6Z" fill="#c49418"/><path d="M5 9.2L6 10.8L7 9.2Z" fill="#8090c0"/><path d="M7 10.4L10 7.8L10.2 9Q12.8 8.8 15 6.8Q15 11 11 11.8L11.4 13.4Z" fill="#66e24e" stroke="#1e9a1c" stroke-width="0.8" stroke-linejoin="round"/></svg>
<svg class="ic" style="left:947px;top:687px" width="16" height="16" viewBox="0 0 16 16"><path d="M2.6 0.6H11.6L14.5 3.4V13.6Q14.5 15.4 12.8 15.4H2.8Q1.1 15.4 1.1 13.6V2.2Q1.1 0.6 2.6 0.6Z" fill="#fff" stroke="#3a76cc" stroke-width="1.1"/><rect x="3" y="2.6" width="9.6" height="10" fill="url(#gDoc)"/><rect x="3" y="10.8" width="10" height="2.6" fill="#5ab4f4"/><g transform="translate(0.2,-2.2)"><path d="M4.6 15.4L5.7 12.1L13 5.9Q14.6 4.7 15.8 6Q16.6 7.4 15.3 8.6L8.1 14.9Z" fill="url(#gPen)" stroke="#cf8a2e" stroke-width="0.8" stroke-linejoin="round"/><path d="M6.6 12.9L13.6 6.8" stroke="#fff8c8" stroke-width="0.9"/><path d="M12.6 6.2Q14.9 5.6 15.2 8.2" fill="none" stroke="#f6c8a8" stroke-width="1.6"/><path d="M4.6 15.4L5.7 12.1L8.1 14.9Z" fill="#f2caa0" stroke="#cf8a2e" stroke-width="0.5"/><path d="M4.5 15.5L5 13.7L6.4 15Z" fill="#3a2410"/></g></svg>
<svg class="ic" style="left:967px;top:687px" width="16" height="16" viewBox="0 0 16 16"><rect x="4.4" y="0.5" width="10.8" height="14.8" fill="#fdfdfd" stroke="#c4c4c4" stroke-width="1"/><rect x="2.2" y="0.3" width="2.6" height="15.2" fill="#c85a28"/><path d="M1 2.2H3.4M1 4.2H3.4M1 6.2H3.4M1 8.2H3.4M1 10.2H3.4M1 12.2H3.4M1 14.2H3.4" stroke="#d8d8d8" stroke-width="0.9"/><rect x="7.2" y="4" width="5.8" height="2.7" fill="#6a9ce4"/><rect x="8.2" y="4.9" width="3.8" height="0.9" fill="#a8c8f4"/><rect x="7.2" y="8" width="3" height="1.2" fill="#6a9ce4"/><path d="M6.2 9.2H10V6.9L15.8 11.4L10 15.8V13.6H6.2Z" fill="#a2d494" stroke="#2a9a22" stroke-width="1" stroke-linejoin="round"/></svg>
<svg class="ic" style="left:927px;top:711px" width="16" height="16" viewBox="0 0 16 16"><path d="M2.8 0.7H13.6L12.6 14.6H1.9Z" fill="url(#gView)" stroke="#3f7ed0" stroke-width="1.1" stroke-linejoin="round"/><path d="M13.6 0.7Q15.6 0.8 15.3 2.8Q15 4.5 13.3 4" fill="none" stroke="#4a88d8" stroke-width="1.1"/><path d="M2.2 11.9Q0.4 12 0.5 13.6Q0.7 15.3 2.6 15.3H12.4" fill="#f4f8fe" stroke="#3468b8" stroke-width="1.1"/><path d="M2.5 12.1H10.6V13.5" fill="none" stroke="#4d86d6" stroke-width="1"/></svg>
<svg class="ic" style="left:947px;top:711px" width="16" height="16" viewBox="0 0 16 16"><rect x="1.5" y="1.5" width="11" height="11" fill="url(#gNote)" stroke="#ee9a48" stroke-width="1.1"/><rect x="2.6" y="2.6" width="8.8" height="1.6" fill="#fffdf5"/><path d="M2 7.8H6.3V12" fill="#fff2c8" stroke="#f0a050" stroke-width="0.9"/><path d="M4.6 15.4L5.7 12.1L13 5.9Q14.6 4.7 15.8 6Q16.6 7.4 15.3 8.6L8.1 14.9Z" fill="url(#gPen)" stroke="#cf8a2e" stroke-width="0.8" stroke-linejoin="round"/><path d="M6.6 12.9L13.6 6.8" stroke="#fff8c8" stroke-width="0.9"/><path d="M12.6 6.2Q14.9 5.6 15.2 8.2" fill="none" stroke="#f6c8a8" stroke-width="1.6"/><path d="M4.6 15.4L5.7 12.1L8.1 14.9Z" fill="#f2caa0" stroke="#cf8a2e" stroke-width="0.5"/><path d="M4.5 15.5L5 13.7L6.4 15Z" fill="#3a2410"/></svg>
<svg class="ic" style="left:967px;top:711px" width="16" height="16" viewBox="0 0 16 16"><path d="M0.5 2.2L2.6 13.4Q7.2 15.6 12.2 13.6L14.4 2.4Z" fill="url(#gBin)"/><path d="M0.5 2.2L2.6 13.4Q7.2 15.6 12.2 13.6" fill="none" stroke="#7aa4e0" stroke-width="0.8"/><path d="M14.4 2.4L12.2 13.6" stroke="#2a3a66" stroke-width="1.1" opacity="0.75"/><ellipse cx="7.4" cy="2.1" rx="6.9" ry="1.5" fill="#e2effd" stroke="#5f92dc" stroke-width="0.7"/><ellipse cx="1.7" cy="1.9" rx="1.1" ry="0.7" fill="#1656c4"/><circle cx="5.8" cy="8.2" r="2.7" fill="none" stroke="#2cc22a" stroke-width="2.4"/><path d="M5.6 6.6L7 9.2L4.4 9.2Z" fill="#f4f6fb"/></svg>
<svg class="ic" style="left:927px;top:729px" width="16" height="16" viewBox="0 0 16 16"><path d="M3.6 14.6Q3.4 9.6 7 8.6Q9 9.8 11 8.6Q14.4 9.4 14.4 14.6Q9 15.8 3.6 14.6Z" fill="url(#gBody)"/><ellipse cx="8.1" cy="5.2" rx="3" ry="3.6" fill="url(#gFace)"/><path d="M4.6 5.6Q4.2 0 8.3 0Q12.4 0 11.8 5.6Q11.4 2.6 10.4 2.4Q8 3.2 6.4 2.4Q5.2 3 4.6 5.6Z" fill="#c49418"/><path d="M7.2 9.2L8.2 10.8L9.2 9.2Z" fill="#8090c0"/><path d="M1 9.4L5.6 14M5.6 9.4L1 14" stroke="#e8381a" stroke-width="2.2" stroke-linecap="round"/></svg>
<svg class="ic" style="left:947px;top:729px" width="16" height="16" viewBox="0 0 16 16"><path d="M2.6 0.6H11.6L14.5 3.4V13.6Q14.5 15.4 12.8 15.4H2.8Q1.1 15.4 1.1 13.6V2.2Q1.1 0.6 2.6 0.6Z" fill="#fff" stroke="#3a76cc" stroke-width="1.1"/><rect x="3" y="2.6" width="9.6" height="10" fill="url(#gDoc)"/><rect x="3" y="10.8" width="10" height="2.6" fill="#5ab4f4"/><g transform="translate(0.2,-2.2)"><path d="M4.6 15.4L5.7 12.1L13 5.9Q14.6 4.7 15.8 6Q16.6 7.4 15.3 8.6L8.1 14.9Z" fill="url(#gPen)" stroke="#cf8a2e" stroke-width="0.8" stroke-linejoin="round"/><path d="M6.6 12.9L13.6 6.8" stroke="#fff8c8" stroke-width="0.9"/><path d="M12.6 6.2Q14.9 5.6 15.2 8.2" fill="none" stroke="#f6c8a8" stroke-width="1.6"/><path d="M4.6 15.4L5.7 12.1L8.1 14.9Z" fill="#f2caa0" stroke="#cf8a2e" stroke-width="0.5"/><path d="M4.5 15.5L5 13.7L6.4 15Z" fill="#3a2410"/></g></svg>
<svg class="ic" style="left:967px;top:729px" width="16" height="16" viewBox="0 0 16 16"><rect x="4.4" y="0.5" width="10.8" height="14.8" fill="#fdfdfd" stroke="#c4c4c4" stroke-width="1"/><rect x="2.2" y="0.3" width="2.6" height="15.2" fill="#c85a28"/><path d="M1 2.2H3.4M1 4.2H3.4M1 6.2H3.4M1 8.2H3.4M1 10.2H3.4M1 12.2H3.4M1 14.2H3.4" stroke="#d8d8d8" stroke-width="0.9"/><rect x="7.2" y="4" width="5.8" height="2.7" fill="#6a9ce4"/><rect x="8.2" y="4.9" width="3.8" height="0.9" fill="#a8c8f4"/><rect x="7.2" y="8" width="3" height="1.2" fill="#6a9ce4"/><path d="M6.2 9.2H10V6.9L15.8 11.4L10 15.8V13.6H6.2Z" fill="#a2d494" stroke="#2a9a22" stroke-width="1" stroke-linejoin="round"/></svg>
<svg class="ic" style="left:927px;top:753px" width="16" height="16" viewBox="0 0 16 16"><path d="M2.8 0.7H13.6L12.6 14.6H1.9Z" fill="url(#gView)" stroke="#3f7ed0" stroke-width="1.1" stroke-linejoin="round"/><path d="M13.6 0.7Q15.6 0.8 15.3 2.8Q15 4.5 13.3 4" fill="none" stroke="#4a88d8" stroke-width="1.1"/><path d="M2.2 11.9Q0.4 12 0.5 13.6Q0.7 15.3 2.6 15.3H12.4" fill="#f4f8fe" stroke="#3468b8" stroke-width="1.1"/><path d="M2.5 12.1H10.6V13.5" fill="none" stroke="#4d86d6" stroke-width="1"/></svg>
<svg class="ic" style="left:947px;top:753px" width="16" height="16" viewBox="0 0 16 16"><rect x="1.5" y="1.5" width="11" height="11" fill="url(#gNote)" stroke="#ee9a48" stroke-width="1.1"/><rect x="2.6" y="2.6" width="8.8" height="1.6" fill="#fffdf5"/><path d="M2 7.8H6.3V12" fill="#fff2c8" stroke="#f0a050" stroke-width="0.9"/><path d="M4.6 15.4L5.7 12.1L13 5.9Q14.6 4.7 15.8 6Q16.6 7.4 15.3 8.6L8.1 14.9Z" fill="url(#gPen)" stroke="#cf8a2e" stroke-width="0.8" stroke-linejoin="round"/><path d="M6.6 12.9L13.6 6.8" stroke="#fff8c8" stroke-width="0.9"/><path d="M12.6 6.2Q14.9 5.6 15.2 8.2" fill="none" stroke="#f6c8a8" stroke-width="1.6"/><path d="M4.6 15.4L5.7 12.1L8.1 14.9Z" fill="#f2caa0" stroke="#cf8a2e" stroke-width="0.5"/><path d="M4.5 15.5L5 13.7L6.4 15Z" fill="#3a2410"/></svg>
<svg class="ic" style="left:967px;top:753px" width="16" height="16" viewBox="0 0 16 16"><path d="M0.5 2.2L2.6 13.4Q7.2 15.6 12.2 13.6L14.4 2.4Z" fill="url(#gBin)"/><path d="M0.5 2.2L2.6 13.4Q7.2 15.6 12.2 13.6" fill="none" stroke="#7aa4e0" stroke-width="0.8"/><path d="M14.4 2.4L12.2 13.6" stroke="#2a3a66" stroke-width="1.1" opacity="0.75"/><ellipse cx="7.4" cy="2.1" rx="6.9" ry="1.5" fill="#e2effd" stroke="#5f92dc" stroke-width="0.7"/><ellipse cx="1.7" cy="1.9" rx="1.1" ry="0.7" fill="#1656c4"/><circle cx="5.8" cy="8.2" r="2.7" fill="none" stroke="#2cc22a" stroke-width="2.4"/><path d="M5.6 6.6L7 9.2L4.4 9.2Z" fill="#f4f6fb"/></svg>
<svg class="ic" style="left:927px;top:771px" width="16" height="16" viewBox="0 0 16 16"><path d="M3.6 14.6Q3.4 9.6 7 8.6Q9 9.8 11 8.6Q14.4 9.4 14.4 14.6Q9 15.8 3.6 14.6Z" fill="url(#gBody)"/><ellipse cx="8.1" cy="5.2" rx="3" ry="3.6" fill="url(#gFace)"/><path d="M4.6 5.6Q4.2 0 8.3 0Q12.4 0 11.8 5.6Q11.4 2.6 10.4 2.4Q8 3.2 6.4 2.4Q5.2 3 4.6 5.6Z" fill="#c49418"/><path d="M7.2 9.2L8.2 10.8L9.2 9.2Z" fill="#8090c0"/><path d="M1 9.4L5.6 14M5.6 9.4L1 14" stroke="#e8381a" stroke-width="2.2" stroke-linecap="round"/></svg>
<svg class="ic" style="left:947px;top:771px" width="16" height="16" viewBox="0 0 16 16"><path d="M2.6 0.6H11.6L14.5 3.4V13.6Q14.5 15.4 12.8 15.4H2.8Q1.1 15.4 1.1 13.6V2.2Q1.1 0.6 2.6 0.6Z" fill="#fff" stroke="#3a76cc" stroke-width="1.1"/><rect x="3" y="2.6" width="9.6" height="10" fill="url(#gDoc)"/><rect x="3" y="10.8" width="10" height="2.6" fill="#5ab4f4"/><g transform="translate(0.2,-2.2)"><path d="M4.6 15.4L5.7 12.1L13 5.9Q14.6 4.7 15.8 6Q16.6 7.4 15.3 8.6L8.1 14.9Z" fill="url(#gPen)" stroke="#cf8a2e" stroke-width="0.8" stroke-linejoin="round"/><path d="M6.6 12.9L13.6 6.8" stroke="#fff8c8" stroke-width="0.9"/><path d="M12.6 6.2Q14.9 5.6 15.2 8.2" fill="none" stroke="#f6c8a8" stroke-width="1.6"/><path d="M4.6 15.4L5.7 12.1L8.1 14.9Z" fill="#f2caa0" stroke="#cf8a2e" stroke-width="0.5"/><path d="M4.5 15.5L5 13.7L6.4 15Z" fill="#3a2410"/></g></svg>
<svg class="ic" style="left:967px;top:771px" width="16" height="16" viewBox="0 0 16 16"><rect x="4.4" y="0.5" width="10.8" height="14.8" fill="#fdfdfd" stroke="#c4c4c4" stroke-width="1"/><rect x="2.2" y="0.3" width="2.6" height="15.2" fill="#c85a28"/><path d="M1 2.2H3.4M1 4.2H3.4M1 6.2H3.4M1 8.2H3.4M1 10.2H3.4M1 12.2H3.4M1 14.2H3.4" stroke="#d8d8d8" stroke-width="0.9"/><rect x="7.2" y="4" width="5.8" height="2.7" fill="#6a9ce4"/><rect x="8.2" y="4.9" width="3.8" height="0.9" fill="#a8c8f4"/><rect x="7.2" y="8" width="3" height="1.2" fill="#6a9ce4"/><path d="M6.2 9.2H10V6.9L15.8 11.4L10 15.8V13.6H6.2Z" fill="#a2d494" stroke="#2a9a22" stroke-width="1" stroke-linejoin="round"/></svg>
<svg class="ic" style="left:927px;top:835px" width="16" height="16" viewBox="0 0 16 16"><path d="M2.8 0.7H13.6L12.6 14.6H1.9Z" fill="url(#gView)" stroke="#3f7ed0" stroke-width="1.1" stroke-linejoin="round"/><path d="M13.6 0.7Q15.6 0.8 15.3 2.8Q15 4.5 13.3 4" fill="none" stroke="#4a88d8" stroke-width="1.1"/><path d="M2.2 11.9Q0.4 12 0.5 13.6Q0.7 15.3 2.6 15.3H12.4" fill="#f4f8fe" stroke="#3468b8" stroke-width="1.1"/><path d="M2.5 12.1H10.6V13.5" fill="none" stroke="#4d86d6" stroke-width="1"/></svg>
<svg class="ic" style="left:947px;top:835px" width="16" height="16" viewBox="0 0 16 16"><rect x="1.5" y="1.5" width="11" height="11" fill="url(#gNote)" stroke="#ee9a48" stroke-width="1.1"/><rect x="2.6" y="2.6" width="8.8" height="1.6" fill="#fffdf5"/><path d="M2 7.8H6.3V12" fill="#fff2c8" stroke="#f0a050" stroke-width="0.9"/><path d="M4.6 15.4L5.7 12.1L13 5.9Q14.6 4.7 15.8 6Q16.6 7.4 15.3 8.6L8.1 14.9Z" fill="url(#gPen)" stroke="#cf8a2e" stroke-width="0.8" stroke-linejoin="round"/><path d="M6.6 12.9L13.6 6.8" stroke="#fff8c8" stroke-width="0.9"/><path d="M12.6 6.2Q14.9 5.6 15.2 8.2" fill="none" stroke="#f6c8a8" stroke-width="1.6"/><path d="M4.6 15.4L5.7 12.1L8.1 14.9Z" fill="#f2caa0" stroke="#cf8a2e" stroke-width="0.5"/><path d="M4.5 15.5L5 13.7L6.4 15Z" fill="#3a2410"/></svg>
<svg class="ic" style="left:967px;top:835px" width="16" height="16" viewBox="0 0 16 16"><path d="M0.5 2.2L2.6 13.4Q7.2 15.6 12.2 13.6L14.4 2.4Z" fill="url(#gBin)"/><path d="M0.5 2.2L2.6 13.4Q7.2 15.6 12.2 13.6" fill="none" stroke="#7aa4e0" stroke-width="0.8"/><path d="M14.4 2.4L12.2 13.6" stroke="#2a3a66" stroke-width="1.1" opacity="0.75"/><ellipse cx="7.4" cy="2.1" rx="6.9" ry="1.5" fill="#e2effd" stroke="#5f92dc" stroke-width="0.7"/><ellipse cx="1.7" cy="1.9" rx="1.1" ry="0.7" fill="#1656c4"/><circle cx="5.8" cy="8.2" r="2.7" fill="none" stroke="#2cc22a" stroke-width="2.4"/><path d="M5.6 6.6L7 9.2L4.4 9.2Z" fill="#f4f6fb"/></svg>
<svg class="ic" style="left:927px;top:853px" width="16" height="16" viewBox="0 0 16 16"><path d="M3.6 14.6Q3.4 9.6 7 8.6Q9 9.8 11 8.6Q14.4 9.4 14.4 14.6Q9 15.8 3.6 14.6Z" fill="url(#gBody)"/><ellipse cx="8.1" cy="5.2" rx="3" ry="3.6" fill="url(#gFace)"/><path d="M4.6 5.6Q4.2 0 8.3 0Q12.4 0 11.8 5.6Q11.4 2.6 10.4 2.4Q8 3.2 6.4 2.4Q5.2 3 4.6 5.6Z" fill="#c49418"/><path d="M7.2 9.2L8.2 10.8L9.2 9.2Z" fill="#8090c0"/><path d="M1 9.4L5.6 14M5.6 9.4L1 14" stroke="#e8381a" stroke-width="2.2" stroke-linecap="round"/></svg>
<svg class="ic" style="left:947px;top:853px" width="16" height="16" viewBox="0 0 16 16"><path d="M2.6 0.6H11.6L14.5 3.4V13.6Q14.5 15.4 12.8 15.4H2.8Q1.1 15.4 1.1 13.6V2.2Q1.1 0.6 2.6 0.6Z" fill="#fff" stroke="#3a76cc" stroke-width="1.1"/><rect x="3" y="2.6" width="9.6" height="10" fill="url(#gDoc)"/><rect x="3" y="10.8" width="10" height="2.6" fill="#5ab4f4"/><g transform="translate(0.2,-2.2)"><path d="M4.6 15.4L5.7 12.1L13 5.9Q14.6 4.7 15.8 6Q16.6 7.4 15.3 8.6L8.1 14.9Z" fill="url(#gPen)" stroke="#cf8a2e" stroke-width="0.8" stroke-linejoin="round"/><path d="M6.6 12.9L13.6 6.8" stroke="#fff8c8" stroke-width="0.9"/><path d="M12.6 6.2Q14.9 5.6 15.2 8.2" fill="none" stroke="#f6c8a8" stroke-width="1.6"/><path d="M4.6 15.4L5.7 12.1L8.1 14.9Z" fill="#f2caa0" stroke="#cf8a2e" stroke-width="0.5"/><path d="M4.5 15.5L5 13.7L6.4 15Z" fill="#3a2410"/></g></svg>
<svg class="ic" style="left:967px;top:853px" width="16" height="16" viewBox="0 0 16 16"><rect x="4.4" y="0.5" width="10.8" height="14.8" fill="#fdfdfd" stroke="#c4c4c4" stroke-width="1"/><rect x="2.2" y="0.3" width="2.6" height="15.2" fill="#c85a28"/><path d="M1 2.2H3.4M1 4.2H3.4M1 6.2H3.4M1 8.2H3.4M1 10.2H3.4M1 12.2H3.4M1 14.2H3.4" stroke="#d8d8d8" stroke-width="0.9"/><rect x="7.2" y="4" width="5.8" height="2.7" fill="#6a9ce4"/><rect x="8.2" y="4.9" width="3.8" height="0.9" fill="#a8c8f4"/><rect x="7.2" y="8" width="3" height="1.2" fill="#6a9ce4"/><path d="M6.2 9.2H10V6.9L15.8 11.4L10 15.8V13.6H6.2Z" fill="#a2d494" stroke="#2a9a22" stroke-width="1" stroke-linejoin="round"/></svg>
</body></html>
